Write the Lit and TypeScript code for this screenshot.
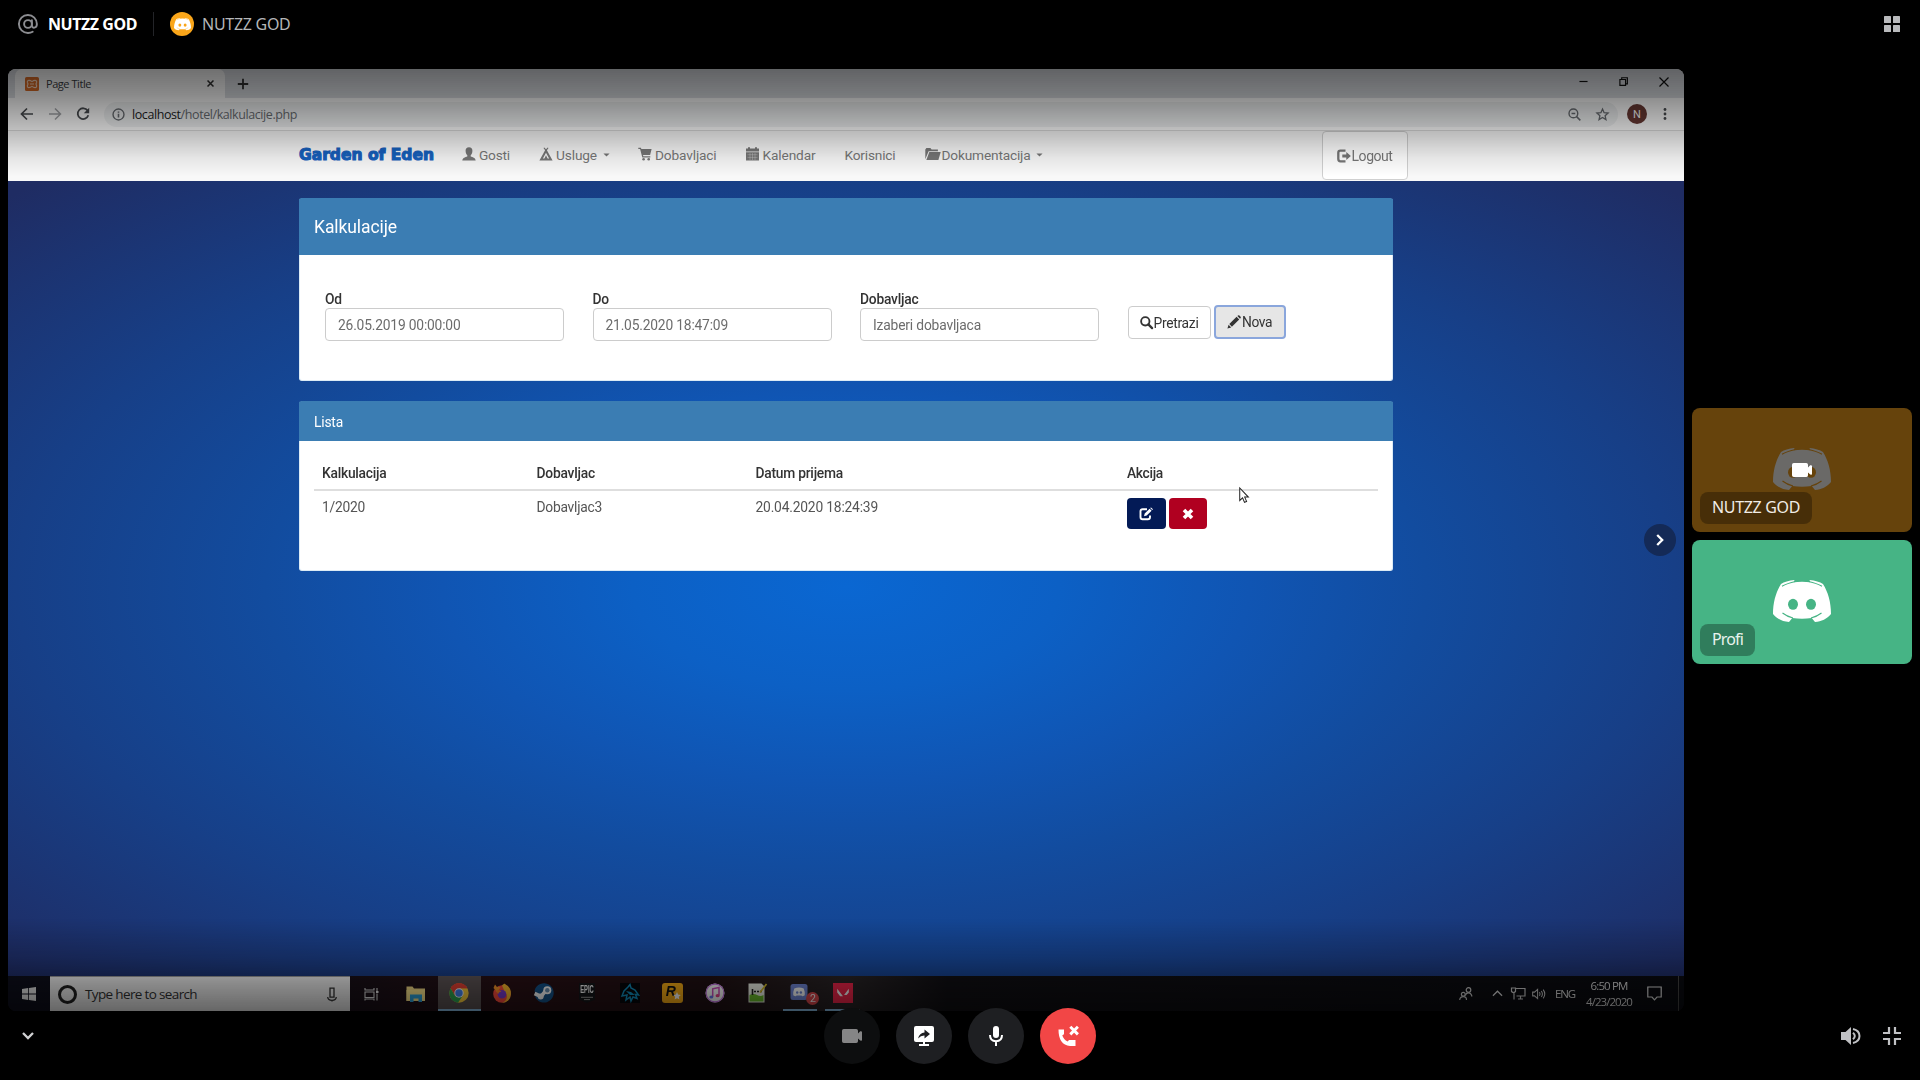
import { LitElement, html, css, svg, nothing } from "lit";
import { customElement } from "lit/decorators.js";

/* Icon set: each entry holds the view box and the drawing. */
const ICONS: Record<string, { box: string; body: unknown }> = {
  at: {
    box: "0 0 20 20",
    body: svg`<g fill="none" stroke="currentColor" stroke-width="1.9" stroke-linecap="round"><circle cx="10" cy="10" r="3.9"/><path d="M13.9 6.2v5.1c0 3.6 5 3.1 5-1.3A9 9 0 1 0 10 19c1.900 0 3.400-.45 4.700-1.250"/></g>`,
  },
  grid: {
    box: "0 0 16 16",
    body: svg`<g fill="currentColor"><rect width="7" height="7" rx=".6"/><rect x="9" width="7" height="7" rx=".6"/><rect y="9" width="7" height="7" rx=".6"/><rect x="9" y="9" width="7" height="7" rx=".6"/></g>`,
  },
  xampp: {
    box: "0 0 14 14",
    body: svg`<rect width="14" height="14" rx="1.600" fill="#e0702a"/><path d="M4 3.400Q5.500 3.400 7 4.600 8.500 3.400 10 3.400 11.800 3.400 11.600 5.400L11 7l.6 1.600q.2 2-1.600 2-1.500 0-3-1.200-1.500 1.200-3 1.200-1.800 0-1.600-2L3 7l-.6-1.600q-.2-2 1.600-2zM5 7h4" fill="none" stroke="#ffdcc4" stroke-width="1.200"/>`,
  },
  close: { box: "0 0 10 10", body: svg`<path d="M1.700 1.700l6.600 6.600M8.300 1.700L1.700 8.300" stroke="currentColor" stroke-width="1.700"/>` },
  thinclose: { box: "0 0 10 10", body: svg`<path d="M.5.5l9 9M9.500.5l-9 9" stroke="currentColor" stroke-width="1.200"/>` },
  plus: { box: "0 0 12 12", body: svg`<path d="M6 .8v10.400M.8 6h10.400" stroke="currentColor" stroke-width="1.800"/>` },
  minus: { box: "0 0 10 10", body: svg`<path d="M.5 5h9" stroke="currentColor" stroke-width="1.300"/>` },
  restore: { box: "0 0 10 10", body: svg`<path d="M1 2.800h6.300V9.300H1zM3 2.500V.8h6.300v6.800H7.500" fill="none" stroke="currentColor" stroke-width="1.300"/>` },
  back: { box: "0 0 14 14", body: svg`<path d="M13 7H1.800M7 1.500L1.500 7 7 12.500" fill="none" stroke="currentColor" stroke-width="1.700"/>` },
  forward: { box: "0 0 14 14", body: svg`<path d="M1 7h11.200M7 1.500L12.500 7 7 12.500" fill="none" stroke="currentColor" stroke-width="1.500"/>` },
  reload: {
    box: "0 0 14 14",
    body: svg`<path d="M11.600 3.600A5.400 5.400 0 1 0 12.300 8.300" fill="none" stroke="currentColor" stroke-width="1.800"/><path d="M13.200.8v5.400H7.800z" fill="currentColor"/>`,
  },
  info: {
    box: "0 0 14 14",
    body: svg`<circle cx="7" cy="7" r="5.900" fill="none" stroke="currentColor" stroke-width="1.500"/><path d="M7 6.200v4.100M7 3.700v1.500" stroke="currentColor" stroke-width="1.700"/>`,
  },
  zoomout: {
    box: "0 0 14 14",
    body: svg`<circle cx="5.800" cy="5.800" r="4.700" fill="none" stroke="currentColor" stroke-width="1.500"/><path d="M9 9l4.300 4.300M3.800 5.800h4" stroke="currentColor" stroke-width="1.600"/>`,
  },
  star: { box: "0 0 14 14", body: svg`<path d="M7 1.200l1.700 3.900 4.300.4-3.200 2.800.9 4.200L7 10.300l-3.700 2.200.9-4.200L1 5.500l4.300-.4z" fill="none" stroke="currentColor" stroke-width="1.400"/>` },
  dots: { box: "0 0 4 12", body: svg`<g fill="currentColor"><circle cx="2" cy="1.500" r="1.400"/><circle cx="2" cy="6" r="1.400"/><circle cx="2" cy="10.500" r="1.400"/></g>` },
  user: { box: "0 0 14 14", body: svg`<path d="M7 .3c2.300 0 3.400 1.500 3.400 3.500S9.600 7.500 8.700 8.300v1.300c2.200.8 4.800 1.500 5 4H.3c.2-2.500 2.800-3.200 5-4V8.300c-.9-.8-1.700-2.500-1.700-4.500S4.700.3 7 .3z" fill="currentColor"/>` },
  tent: { box: "0 0 14 14", body: svg`<path d="M5.300.4L7 2.300 8.700.4l.8.700L7.900 3.300 13.600 13.500H.4L6.100 3.300 4.500 1.100zM7 5.800L3.900 11.600h1.500L7 8.200l1.600 3.400h1.500z" fill="currentColor" fill-rule="evenodd"/>` },
  cart: { box: "0 0 14 14", body: svg`<path d="M.3.700h2.600l.5 1.300h10.200l-1.500 6H5l.3 1.200h7v1.300H4.300L2.100 2H.3z" fill="currentColor"/><circle cx="5.600" cy="12.200" r="1.300" fill="currentColor"/><circle cx="10.700" cy="12.200" r="1.300" fill="currentColor"/>` },
  calendar: { box: "0 0 13 14", body: svg`<path d="M0 1.500h2V.2h2v1.300h5V.2h2v1.300h2v3H0zM0 5.200h13V13.500H0z" fill="currentColor"/><path d="M1.500 7.700h10M1.500 10.400h10M4 6v7M6.500 6v7M9 6v7" stroke="#d8d8d8" stroke-width=".35"/>` },
  folder: { box: "0 0 16 14", body: svg`<path d="M.3 12.200V2.500L1.400 1h4l1.200 1.500h6.300v1.700H3.600z" fill="currentColor"/><path d="M4.300 5h11.400l-2.300 8H1.300z" fill="currentColor"/>` },
  logout: { box: "0 0 14 14", body: svg`<path d="M8.500 1.700H3.400Q1.300 1.700 1.300 3.800v6.200Q1.300 12.300 3.400 12.300h5.100" fill="none" stroke="currentColor" stroke-width="2.300"/><path d="M5.300 5.600h4V3L13.900 7 9.300 11V8.400h-4z" fill="currentColor"/>` },
  caret: { box: "0 0 8 4", body: svg`<path d="M.5.2h7L4 3.800z" fill="currentColor"/>` },
  search: { box: "0 0 14 14", body: svg`<circle cx="5.700" cy="5.700" r="4.500" fill="none" stroke="currentColor" stroke-width="2"/><path d="M9 9l4 4" stroke="currentColor" stroke-width="2.500" stroke-linecap="round"/>` },
  pencil: { box: "0 0 14 14", body: svg`<path d="M.4 13.600l1.200-3.800 2.600 2.600zM2.300 9L9.600 1.800l2.600 2.600-7.300 7.300zM10.400 1.100l.6-.6q.7-.6 1.400 0l1.200 1.200q.6.700 0 1.300l-.6.7z" fill="currentColor"/>` },
  edit: { box: "0 0 14 14", body: svg`<path d="M8 2.200H3.600Q1.500 2.200 1.500 4.300v5.600Q1.500 12.200 3.600 12.200h5.200q2.200 0 2.200-2.300V8.500" fill="none" stroke="#fff" stroke-width="1.900"/><path d="M5 9.300l.7-2.700L10.600 1.700l2 2L7.700 8.600zM11.200 1.100l.8-.7 2 1.900-.8.800z" fill="#fff"/>` },
  remove: { box: "0 0 14 14", body: svg`<path d="M3 3l8 8M11 3l-8 8" stroke="#fff" stroke-width="3.600"/>` },
  cursor: { box: "0 0 12 19", body: svg`<path d="M.8.8v13.600l3.100-2.900 2.100 4.900 2.300-1-2.100-4.700h4z" fill="#fff" stroke="#222" stroke-width="1.100"/>` },
  windows: { box: "0 0 14 14", body: svg`<path d="M0 2l6.200-.9v5.500H0zM7 1l7-1v6.600H7zM0 7.400h6.200v5.500L0 12zM7 7.400h7V14l-7-1z" fill="#e8e8e8"/>` },
  mic2: { box: "0 0 10 14", body: svg`<path d="M3 .7h4v9H3zM.7 9.500Q1 12.800 5 12.800T9.300 9.500M5 12.800V14" fill="none" stroke="#333" stroke-width="1.300"/>` },
  taskview: { box: "0 0 15 14", body: svg`<path d="M1 1v2h9V1M1 5h9v5.500H1zM1 13.500V12h9v1.500M13 1v3M13 6.500V13.500" fill="none" stroke="#ddd" stroke-width="1.100"/><rect x="12" y="4" width="2.500" height="2" fill="#eee"/>` },
  explorer: { box: "0 0 20 18", body: svg`<path d="M.5 1.500h6l1.500 2h11V16H.5z" fill="#f9e08a"/><path d="M.5 5H19v11H.5z" fill="#ffe88f"/><path d="M4 9.500h12V17h-3.500v-3.500h-5V17H4z" fill="#2fa4dc"/>` },
  chrome: {
    box: "0 0 20 20",
    body: svg`<circle cx="10" cy="10" r="9.700" fill="#ffd23f"/><path d="M10 10L1.600 5.150A9.700 9.700 0 0 1 18.400 5.150L10 5.200z" fill="#ea4335"/><path d="M10 5.200h8.500A9.700 9.700 0 0 0 1.600 5.150L5.800 12.400z" fill="#ea4335"/><path d="M1.600 5.150A9.700 9.700 0 0 0 9 19.650L13.900 12.400H5.800z" fill="#2fa853"/><circle cx="10" cy="10" r="4.700" fill="#fff"/><circle cx="10" cy="10" r="3.700" fill="#4285f4"/>`,
  },
  firefox: {
    box: "0 0 20 20",
    body: svg`<circle cx="10" cy="11" r="8.800" fill="#ff4d3d"/><path d="M10 2.500c2-2.600 3.500-2 3.600-1 3.400 1.600 5.900 5.400 5.300 10A8.900 8.900 0 0 1 10 19.900c5-2 6.500-7 3-10.500z" fill="#ffbd2f"/><path d="M1.500 5L3 1.500 5 4q2-.5 3.500.5L5 9z" fill="#ff9a2a"/><circle cx="10" cy="11.300" r="4.300" fill="#7a3bd0"/><path d="M3.500 8q3-2 6 .6-3 .4-3.300 2.400z" fill="#ff8a2a"/>`,
  },
  steam: {
    box: "0 0 20 20",
    body: svg`<path d="M.6 7.500A9.700 9.700 0 1 1 1.500 14.600z" fill="#14548c"/><path d="M.6 10.500l6.400 3 5-6" fill="none" stroke="#fff" stroke-width="3.600"/><circle cx="13.300" cy="7.300" r="4" fill="#fff"/><circle cx="13.300" cy="7.300" r="2.200" fill="#6d93b4"/><circle cx="6.700" cy="13.400" r="3" fill="#fff"/>`,
  },
  epic: {
    box: "0 0 18 20",
    body: svg`<path d="M1 0h16v16.500L9 20 1 16.500z" fill="#15171a"/><path d="M3 14.300h12M6 16.600h6" stroke="#999" stroke-width="1"/>`,
  },
  wolf: {
    box: "0 0 20 20",
    body: svg`<rect width="20" height="20" fill="#06080c"/><path d="M2 13l2-5 4-4 2-2.500 1 3.500 4 2 3.500 5-3-.5 1.500 4-4-1.500-2 4-1-4-4 3 1-5z" fill="none" stroke="#128fbf" stroke-width="1.500"/><path d="M6 8l5 1 4 3-5 0z" fill="#128fbf"/>`,
  },
  hand: { box: "0 0 8 8", body: svg`<path d="M4 0l1.100 2.600 2.700.3-2 1.900.6 2.800L4 6.200 1.600 7.600l.6-2.800-2-1.900 2.700-.3z" fill="#fff"/>` },
  itunes: {
    box: "0 0 20 20",
    body: svg`<circle cx="10" cy="10" r="9.500" fill="#fff"/><circle cx="10" cy="10" r="8.900" fill="none" stroke="#c975e8" stroke-width="1.100"/><path d="M7.700 13.800V5.800l6.300-1.300v8" fill="none" stroke="#d250c0" stroke-width="1.500"/><ellipse cx="6.300" cy="14" rx="2" ry="1.600" fill="#6d7bf0"/><ellipse cx="12.600" cy="12.700" rx="2" ry="1.600" fill="#e8458c"/>`,
  },
  npp: {
    box: "0 0 20 20",
    body: svg`<path d="M1.500.5h13l3 3V19.500h-16z" fill="#f0f3ea"/><path d="M2.500 12q4-2 7.500 0t6.500 0v6.500h-14z" fill="#6cc02c"/><path d="M5.500 6v6M7 8.500h2M10 8.500h2M13 8.500h2" stroke="#222" stroke-width="1.600"/><path d="M13 9.500L19.500 1" stroke="#d8c02a" stroke-width="1.700"/>`,
  },
  discordapp: {
    box: "0 0 20 20",
    body: svg`<rect x=".5" y="1" width="17" height="16" rx="2.500" fill="#7289da"/><path d="M4.300 5.500Q9 3.700 13.700 5.500 15 8.500 14.800 12.300 12 14 11.500 12.600H6.500Q6 14 3.200 12.300 3 8.500 4.300 5.500z" fill="#fff"/><circle cx="7.200" cy="9.500" r="1.200" fill="#7289da"/><circle cx="10.900" cy="9.500" r="1.200" fill="#7289da"/>`,
  },
  valorant: { box: "0 0 19 19", body: svg`<rect width="19" height="19" fill="#f2264b"/><path d="M4 5.500l5.500 7.200H6.800L4 9zM15 5.500V9l-2 2.500h-2.500z" fill="#fff"/>` },
  people: { box: "0 0 14 14", body: svg`<g fill="none" stroke="#ccc" stroke-width="1.200"><circle cx="9.500" cy="3" r="2.300"/><path d="M6.500 8.500Q7 5.800 9.500 5.800T13 9.500"/><circle cx="4.300" cy="7.300" r="1.900"/><path d="M.7 13Q1 9.700 4.300 9.700T7.500 13"/></g>` },
  up: { box: "0 0 12 7", body: svg`<path d="M1 6l5-5 5 5" fill="none" stroke="#ddd" stroke-width="1.300"/>` },
  network: { box: "0 0 15 13", body: svg`<path d="M5 1.500h9v7.500H5.500M3 6v6.500M.5 1h4v3.500q-2 2-4 0zM7 12h5M9.500 9v3" fill="none" stroke="#ccc" stroke-width="1.200"/>` },
  sound: { box: "0 0 15 12", body: svg`<path d="M.7 4h2L6 1v10L2.700 8h-2zM8 4q1.300 2 0 4M10 2.700q2.300 3.300 0 6.600M12 1.300q3.400 4.700 0 9.400" fill="none" stroke="#ccc" stroke-width="1.100"/>` },
  notify: { box: "0 0 15 15", body: svg`<path d="M.8 1h13.400v10H10l-2.500 2.800L5 11H.8z" fill="none" stroke="#ddd" stroke-width="1.200"/>` },
  camera: { box: "0 0 20 14", body: svg`<path d="M1.800 0h12.400Q16 0 16 1.800v2.700L18.200 2.300Q20 2 20 3v8q0 1-1.800.5L16 9.500v2.700Q16 14 14.200 14H1.800Q0 14 0 12.200V1.800Q0 0 1.800 0z" fill="currentColor"/>` },
  share: { box: "0 0 20 20", body: svg`<path d="M2 0h16q2 0 2 2v12q0 2-2 2h-7v2h4v2H5v-2h4v-2H2q-2 0-2-2V2Q0 0 2 0z" fill="#fff"/><path d="M4 12.500Q5.500 7 10.500 6.500V3.500L16 8l-5.500 4.500v-3Q7 9.300 4 12.500z" fill="#1e1f22"/>` },
  mic: { box: "0 0 14 20", body: svg`<rect x="4" width="6" height="12" rx="3" fill="#fff"/><path d="M1 9Q1 15.200 7 15.200T13 9M7 15v5" fill="none" stroke="#fff" stroke-width="2"/>` },
  hangup: { box: "0 0 21 21", body: svg`<path d="M.5 3.500h5.500V8.300L4.300 9.300Q5.500 13.700 9.700 15.500L11 14h6.500v6H12Q.5 19 .5 3.500z" fill="#fff"/><path d="M12.300.800l7.600 7.600M19.900.800l-7.600 7.600" stroke="#fff" stroke-width="2.900"/>` },
  chevdown: { box: "0 0 12 8", body: svg`<path d="M1 1l5 5 5-5" fill="none" stroke="#d0d1d3" stroke-width="2.300"/>` },
  chevright: { box: "0 0 8 12", body: svg`<path d="M1.200 1l5 5-5 5" fill="none" stroke="#fff" stroke-width="2.300"/>` },
  volume: { box: "0 0 20 18", body: svg`<path d="M0 5h4.500L10 0v18l-5.500-5H0z" fill="#c0c1c4"/><path d="M12 5.800q3.600 3.200 0 6.400M12 2q6.500 1.500 6.500 7T12 16" fill="none" stroke="#c0c1c4" stroke-width="2"/>` },
  exitfull: { box: "0 0 18 18", body: svg`<path d="M6 0v6H0M12 0v6h6M6 18v-6H0M12 18v-6h6" fill="none" stroke="#c0c1c4" stroke-width="2.200"/>` },
};

const icon = (name: keyof typeof ICONS & string, w: number, h = w) =>
  html`<svg class="ico" width=${w} height=${h} viewBox=${ICONS[name].box}>${ICONS[name].body}</svg>`;

/* Face logo; bg is the colour behind it, used for the eyes and the seams. */
const face = (w: number, fg: string, bg: string) => html`<svg class="ico" width=${w} height=${(w * 42) / 58} viewBox="0 0 58 42">
  <path fill=${fg} d="M21.500 0C16 .5 11 2 8 4 3 12 0 22 0 34c4 5 9.500 7.500 16 8l3.300-4q9.700 1.500 19.400 0l3.300 4c6.500-.5 12-3 16-8 0-12-3-22-8-30-3-2-8-3.500-13.500-4l.8 2.200q-8.300-1-16.600 0z"/>
  <path fill="none" stroke=${bg} stroke-width="1.100" d="M9 6.300Q14 3.300 22.500 1.500M49 6.300Q44 3.300 35.500 1.500M9.500 33Q14 36.500 20 38M48.500 33Q44 36.500 38 38"/>
  <ellipse cx="20" cy="24.300" rx="5" ry="5.500" fill=${bg}/><ellipse cx="38" cy="24.300" rx="5" ry="5.500" fill=${bg}/>
</svg>`;

/* Text whose tracking is adjusted so that it takes exactly w pixels. */
const fit = (text: string, w: number, cls = "") => html`<span class="fit ${cls}" data-w=${w}>${text}</span>`;

const NAV = [
  { icon: "user", iw: 14, text: "Gosti", w: 31, gap: 3, caret: false, col: 77 },
  { icon: "tent", iw: 14, text: "Usluge", w: 41, gap: 3, caret: true, col: 99 },
  { icon: "cart", iw: 14, text: "Dobavljaci", w: 61.5, gap: 3, caret: false, col: 107.500 },
  { icon: "calendar", iw: 13, text: "Kalendar", w: 53, gap: 4, caret: false, col: 99 },
  { icon: "", iw: 0, text: "Korisnici", w: 51, gap: 0, caret: false, col: 80.500 },
  { icon: "folder", iw: 16, text: "Dokumentacija", w: 89, gap: 0.5, caret: true, col: 396.500 },
];
const FIELDS = [
  { label: "Od", lw: 17, value: "26.05.2019 00:00:00", w: 122.500 },
  { label: "Do", lw: 16.500, value: "21.05.2020 18:47:09", w: 122.500 },
  { label: "Dobavljac", lw: 58.500, value: "Izaberi dobavljaca", w: 108 },
];
const HEADS = [["Kalkulacija", 64.5], ["Dobavljac", 58.5], ["Datum prijema", 87.5], ["Akcija", 36]] as [string, number][];
const ROW = [["1/2020", 43], ["Dobavljac3", 65.5], ["20.04.2020 18:24:39", 122.5]] as [string, number][];
const APPS = ["chrome", "firefox", "steam", "epic", "wolf", "rockstar", "itunes", "npp", "discordapp", "valorant"];

@customElement("app-root")
export class AppRoot extends LitElement {
  static styles = css`
    :host { display: block; width: 1920px; height: 1080px; overflow: hidden; background: #000; font-family: "Noto Sans", sans-serif; }
    * { box-sizing: border-box; }
    .ico { display: block; flex: none; overflow: visible; }
    .fit { display: inline-block; white-space: pre; flex: none; }
    .top { height: 69px; padding: 0 20px 0 18px; display: flex; align-items: flex-start; font-size: 16px; }
    .crumb { height: 48px; display: flex; align-items: center; color: #b5b6b8; }
    .crumb .fit { margin-top: -1px; }
    .at { color: #8c8d91; margin-right: 10px; }
    .me { color: #fff; font-weight: 700; }
    .rule { width: 1px; height: 24px; background: #232428; margin: 0 16px 0 16px; }
    .avatar { width: 24px; height: 24px; border-radius: 50%; background: #faa61a; display: grid; place-items: center; margin-right: 8px; }
    .layout { margin: 16px 0 0 auto; color: #b9babc; }
    .main { display: flex; height: 942px; padding: 0 8px; gap: 8px; }
    .video { position: relative; width: 1676px; height: 942px; border-radius: 8px; overflow: hidden; }
    .shade { position: absolute; inset: 0; background:
      linear-gradient(rgba(0,0,0,.56) 0, rgba(0,0,0,.46) 26px, rgba(0,0,0,.33) 48px, rgba(0,0,0,.21) 68px, rgba(0,0,0,.08) 88px, rgba(0,0,0,0) 108px),
      linear-gradient(to top, rgba(0,0,0,.58) 0, rgba(0,0,0,.42) 28px, rgba(0,0,0,.2) 54px, rgba(0,0,0,0) 92px); }
    .desk { display: flex; flex-direction: column; height: 942px; font-family: Roboto, sans-serif; filter: blur(.5px); }
    .tabs { height: 29px; background: #dee1e6; display: flex; padding-left: 7px; }
    .tab { width: 210px; background: #fff; border-radius: 7px 7px 0 0; display: flex; align-items: center; padding: 0 10px 0 10px; font: 11px "Open Sans"; color: #3c4043; }
    .tab .fit { margin-left: 7px; }
    .tab .x { margin-left: auto; color: #333; }
    .newtab { margin: 9px 0 0 12px; color: #333; }
    .win { margin-left: auto; display: flex; gap: 31px; padding: 8px 15px 0 0; color: #111; }
    .bar { height: 33px; background: #fff; border-bottom: 1px solid #dcdcdc; display: flex; align-items: center; padding-left: 12px; color: #4a4d51; }
    .bar .fwd { margin: 0 14px; color: #a5a7aa; }
    .pill { width: 1514px; height: 25px; border-radius: 13px; background: #f1f3f4; margin-left: 14px; display: flex; align-items: center; padding: 0 9px 0 8px; font: 12.500px "Open Sans"; color: #6a6e73; }
    .pill .fit { margin-left: 7px; }
    .pill b { font-weight: 400; color: #222; }
    .pill .zo { margin-left: auto; margin-right: 15px; }
    .n { width: 20px; height: 20px; border-radius: 50%; background: #6a3a35; color: #fff; font-size: 11px; display: grid; place-items: center; margin: 0 16px 0 9px; }
    .nav { height: 50px; background: #f8f8f8; display: flex; padding-left: 291px; font-size: 13.700px; color: #777; flex: none; }
    .brand { width: 163px; height: 48px; display: flex; align-items: center; font: 900 15.500px "DejaVu Sans"; color: #1660bd; -webkit-text-stroke: 1.100px #1660bd; }
    .item { height: 48px; display: flex; align-items: center; flex: none; }
    .item .ico { margin-top: -2px; }
    .item .caret { margin: 2px 0 0 5.500px; }
    .logout { width: 86px; height: 49px; background: #fff; border: 1px solid #d0d0d0; border-radius: 4px; display: flex; align-items: center; justify-content: center; gap: 1px; font-size: 14px; }
    .body { flex: 1; padding: 17px 0 0 291px; background: radial-gradient(ellipse farthest-corner at 50% 51%, #0a67d2 0%, #0c60c5 18%, #1055b3 34%, #124c9f 49%, #173f87 70%, #1f2c63 98%); }
    .panel { width: 1094px; background: #fff; border-radius: 3px; border: 1px solid #3b7db3; border-color: #3b7db3 #dcebf5 #dcebf5; }
    .head { margin: 0 -1px; background: #3b7db3; color: #fff; display: flex; align-items: center; padding: 0 15px; }
    .search { height: 183px; }
    .search .head { height: 56px; font-size: 17.500px; }
    .form { display: flex; padding: 35px 0 0 25px; }
    .field { width: 239px; margin-right: 28.500px; font-size: 13.800px; }
    .label { display: block; height: 18px; line-height: 18px; font-weight: 500; color: #333; }
    .input { height: 33px; border: 1px solid #ccc; border-radius: 4px; display: flex; align-items: center; padding-left: 12px; color: #6c6c6c; }
    .btns { display: flex; gap: 3px; padding-top: 16px; font-size: 13.800px; color: #333; }
    .btn { width: 83px; height: 33px; border: 1px solid #ccc; border-radius: 4px; display: flex; align-items: center; justify-content: center; gap: 1px; }
    .btn.on { width: 72px; height: 34px; background: #e6e6e6; border: 2px solid #8aa6dc; margin-top: -1px; }
    .list { height: 170px; margin-top: 20px; }
    .list .head { height: 39px; font-size: 13.800px; }
    .table { margin: 0 14px; display: grid; grid-template-columns: 214.500px 219px 371.500px 1fr; padding: 21px 0 0 8px; font-size: 13.800px; color: #555; }
    .th { font-weight: 500; color: #333; height: 22px; line-height: 22px; }
    .line { grid-column: 1 / -1; height: 2px; background: #dedede; margin: 5px 0 0 -8px; }
    .td { height: 33px; line-height: 33px; }
    .acts { display: flex; gap: 3px; padding-top: 7px; }
    .act { width: 38.500px; height: 31px; border-radius: 4px; display: grid; place-items: center; background: #031a56; }
    .act.del { background: #b00020; }
    .mouse { position: absolute; left: 1231px; top: 418px; }
    .task { height: 35px; flex: none; display: flex; align-items: center; background: linear-gradient(90deg, #0e0f1c 0, #151019 18%, #2a1116 30%, #201114 42%, #2a2527 50%, #111014 56%, #0a0b10 100%); color: #eee; }
    .task .fit { margin-top: -1px; }
    .start { width: 42px; padding-left: 14px; }
    .find { width: 300px; height: 35px; background: linear-gradient(#eee, #f4f4f4); border-top: 1px solid #999; display: flex; align-items: center; padding: 0 13px 0 8px; font: 13.500px "Open Sans"; color: #333; }
    .ring { width: 19px; height: 19px; border: 3px solid #222; border-radius: 50%; margin-right: 8px; }
    .find .ico { margin-left: auto; }
    .tv { margin: 0 27px 0 14px; }
    .apps { display: flex; margin-left: 12px; }
    .app { width: 42.600px; height: 35px; display: grid; place-items: center; position: relative; border-bottom: 2px solid transparent; }
    .app.cur { background: #5d5455; border-bottom-color: #8ec4ec; }
    .app.run::after { content: ""; position: absolute; left: 4px; right: 4px; bottom: -2px; height: 2px; background: #8ec4ec; }
    .logo { position: relative; }
    .word { position: absolute; left: 0; right: 0; top: 0; display: flex; justify-content: center; color: #fff; font: 700 8.500px/12px "Liberation Sans"; transform: scale(.68, 1.3); }
    .rock { position: relative; width: 21px; height: 20px; border-radius: 3px; background: #fcaf17; color: #111; font: italic 900 14px "Liberation Sans"; padding-left: 4px; line-height: 16px; }
    .rock .ico { position: absolute; right: 2px; bottom: 3px; }
    .badge { position: absolute; right: 2px; bottom: 4px; width: 13px; height: 13px; border-radius: 50%; background: #e04a4f; color: #fff; font-size: 10.500px; line-height: 13px; text-align: center; }
    .tray { margin-left: auto; display: flex; align-items: center; font: 11.500px "Open Sans"; color: #ddd; height: 35px; }
    .clock { width: 46px; text-align: center; line-height: 16px; font-size: 11.500px; margin: 0 15px 0 11px; display: flex; flex-direction: column; align-items: center; }
    .clock .fit { margin: 0; }
    .edge { width: 1px; height: 35px; background: #444; margin: 0 5px 0 16px; }
    .next { position: absolute; right: 8px; top: 455px; width: 32px; height: 32px; border-radius: 50%; background: #142a57; display: grid; place-items: center; }
    .side { display: flex; flex-direction: column; justify-content: center; gap: 8px; width: 220px; height: 934px; }
    .tile { height: 124px; border-radius: 8px; display: grid; place-items: center; position: relative; background: #46b485; }
    .tile > .ico { margin-top: -2px; }
    .tile.dim { background: #66430c; color: #fff; }
    .tile .cam { position: absolute; left: 100px; top: 55px; }
    .name { position: absolute; left: 8px; bottom: 8px; height: 32px; border-radius: 8px; padding: 0 12px; line-height: 31px; font-size: 16px; color: #e9f3ee; background: rgba(0,0,0,.3); }
    .dim .name { color: #f0ece6; }
    .foot { position: relative; display: flex; align-items: center; justify-content: space-between; height: 56px; margin-top: -3px; padding: 0 19px 0 22px; }
    .left { width: 357px; }
    .right { width: 360px; display: flex; gap: 22px; justify-content: flex-end; }
    .calls { display: flex; gap: 16px; }
    .call { width: 56px; height: 56px; border-radius: 50%; background: #1e1f22; display: grid; place-items: center; color: #fff; }
    .call.off { background: #0d0e0f; color: #858586; }
    .call.end { background: #f24646; }
  `;

  firstUpdated() {
    this.renderRoot.querySelectorAll<HTMLElement>(".fit").forEach((el) => {
      const target = Number(el.dataset.w);
      const n = (el.textContent ?? "").length;
      el.style.letterSpacing = `${(target - el.getBoundingClientRect().width) / n}px`;
    });
  }

  private app(name: string) {
    const cls = name === "chrome" ? "app cur" : name === "discordapp" || name === "valorant" ? "app run" : "app";
    const art = name === "epic" ? html`<div class="logo">${icon("epic", 18, 20)}<span class="word">EPIC</span></div>`
      : name === "rockstar" ? html`<div class="rock">R${icon("hand", 8)}</div>`
      : icon(name, 20);
    return html`<div class=${cls}>${art}${name === "discordapp" ? html`<span class="badge">2</span>` : nothing}</div>`;
  }

  render() {
    return html`
      <div class="top">
        <div class="crumb">
          <span class="at">${icon("at", 20)}</span>${fit("NUTZZ GOD", 89, "me")}
          <i class="rule"></i>
          <span class="avatar">${face(17, "#fff", "#faa61a")}</span>${fit("NUTZZ GOD", 88.5)}
        </div>
        <div class="layout">${icon("grid", 16)}</div>
      </div>
      <div class="main">
        <div class="video">
          <div class="desk">
            <div class="tabs">
              <div class="tab">${icon("xampp", 14)}${fit("Page Title", 45)}<span class="x">${icon("close", 9)}</span></div>
              <span class="newtab">${icon("plus", 12)}</span>
              <div class="win">${icon("minus", 9)}${icon("restore", 9)}${icon("thinclose", 10)}</div>
            </div>
            <div class="bar">
              ${icon("back", 14)}<span class="fwd">${icon("forward", 14)}</span>${icon("reload", 14)}
              <div class="pill">${icon("info", 13)}<span class="fit" data-w="165"><b>localhost</b>/hotel/kalkulacije.php</span><span class="zo">${icon("zoomout", 13)}</span>${icon("star", 13)}</div>
              <span class="n">N</span>${icon("dots", 4, 12)}
            </div>
            <div class="nav">
              <div class="brand">${fit("Garden of Eden", 135)}</div>
              ${NAV.map((i) => html`<div class="item" style="width:${i.col}px">
                ${i.icon ? icon(i.icon, i.iw, 14) : nothing}<span style="width:${i.gap}px"></span>${fit(i.text, i.w)}
                ${i.caret ? html`<span class="caret">${icon("caret", 7, 4)}</span>` : nothing}</div>`)}
              <div class="logout">${icon("logout", 14)}${fit("Logout", 41)}</div>
            </div>
            <div class="body">
              <div class="panel search">
                <div class="head">${fit("Kalkulacije", 83)}</div>
                <div class="form">
                  ${FIELDS.map((f) => html`<div class="field"><span class="label">${fit(f.label, f.lw)}</span><div class="input">${fit(f.value, f.w)}</div></div>`)}
                  <div class="btns">
                    <div class="btn">${icon("search", 13)}${fit("Pretrazi", 45)}</div>
                    <div class="btn on">${icon("pencil", 14)}${fit("Nova", 30)}</div>
                  </div>
                </div>
              </div>
              <div class="panel list">
                <div class="head">${fit("Lista", 29)}</div>
                <div class="table">
                  ${HEADS.map(([t, w]) => html`<div class="th">${fit(t, w)}</div>`)}
                  <i class="line"></i>
                  ${ROW.map(([t, w]) => html`<div class="td">${fit(t, w)}</div>`)}
                  <div class="acts"><span class="act">${icon("edit", 14)}</span><span class="act del">${icon("remove", 14)}</span></div>
                </div>
              </div>
            </div>
            <div class="task">
              <div class="start">${icon("windows", 14)}</div>
              <div class="find"><i class="ring"></i>${fit("Type here to search", 112)}${icon("mic2", 10, 15)}</div>
              <span class="tv">${icon("taskview", 15, 14)}</span>${icon("explorer", 20, 18)}
              <div class="apps">${APPS.map((a) => this.app(a))}</div>
              <div class="tray">
                ${icon("people", 14)}<span style="width:19px"></span>${icon("up", 11, 7)}<span style="width:8px"></span>${icon("network", 15, 13)}<span style="width:6px"></span>${icon("sound", 14, 12)}<span style="width:9px"></span>${fit("ENG", 20)}
                <div class="clock">${fit("6:50 PM", 37)}${fit("4/23/2020", 46)}</div>
                ${icon("notify", 15)}<i class="edge"></i>
              </div>
            </div>
          </div>
          <span class="mouse">${icon("cursor", 11, 18)}</span>
          <div class="shade"></div>
          <div class="next">${icon("chevright", 8, 12)}</div>
        </div>
        <div class="side">
          <div class="tile dim">${face(58, "#6a6967", "#66430c")}<span class="cam">${icon("camera", 20, 14)}</span><span class="name">${fit("NUTZZ GOD", 88)}</span></div>
          <div class="tile">${face(58, "#fff", "#46b485")}<span class="name">${fit("Profi", 31)}</span></div>
        </div>
      </div>
      <div class="foot">
        <div class="left">${icon("chevdown", 12, 8)}</div>
        <div class="calls">
          <div class="call off">${icon("camera", 20, 14)}</div>
          <div class="call">${icon("share", 20)}</div>
          <div class="call">${icon("mic", 14, 20)}</div>
          <div class="call end">${icon("hangup", 21)}</div>
        </div>
        <div class="right">${icon("volume", 20, 18)}${icon("exitfull", 18)}</div>
      </div>
    `;
  }
}
